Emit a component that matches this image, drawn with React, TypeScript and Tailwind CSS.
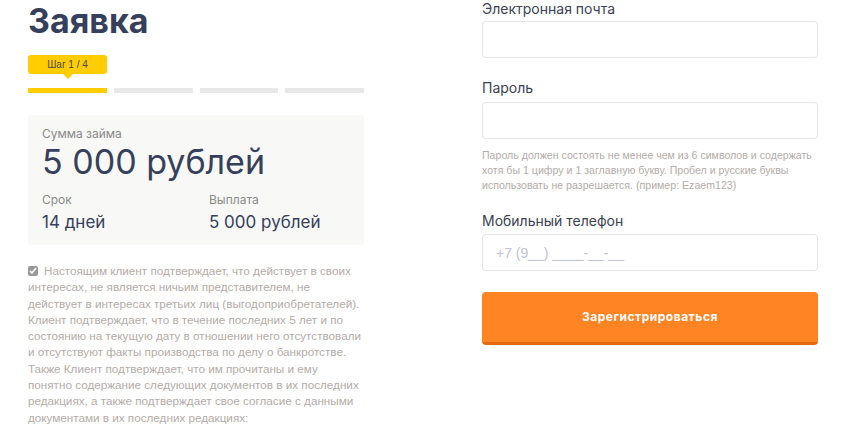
import { useState } from 'react';

const steps = [1, 2, 3, 4];

const consentLines = [
  'интересах, не является ничьим представителем, не',
  'действует в интересах третьих лиц (выгодоприобретателей).',
  'Клиент подтверждает, что в течение последних 5 лет и по',
  'состоянию на текущую дату в отношении него отсутствовали',
  'и отсутствуют факты производства по делу о банкротстве.',
  'Также Клиент подтверждает, что им прочитаны и ему',
  'понятно содержание следующих документов в их последних',
  'редакциях, а также подтверждает свое согласие с данными',
  'документами в их последних редакциях:',
];

export default function App() {
  const [agree, setAgree] = useState(true);

  return (
    <main className="w-[843px] h-[425px] overflow-hidden bg-white flex gap-[118px] pl-[28px] font-['Inter',sans-serif]">
      <section className="w-[336px] shrink-0">
        <h1 className="mt-[1px] text-[34px] leading-[40px] font-bold text-[#363f5c]">Заявка</h1>

        <div className="mt-[14px] relative w-[79px] h-[19px] rounded-[3px] bg-[#ffcc00] flex items-center justify-center text-[10px] text-[#4a4a4a] font-['Liberation_Sans',sans-serif]">
          Шаг 1 / 4
          <span className="absolute left-1/2 -translate-x-1/2 top-full w-0 h-0 border-l-[5px] border-r-[5px] border-t-[5px] border-l-transparent border-r-transparent border-t-[#ffcc00]" />
        </div>

        <div className="mt-[14px] flex gap-[7px]">
          {steps.map((s) => (
            <div key={s} className={s === 1 ? 'h-[5px] w-[79px] bg-[#ffcc00]' : 'h-[5px] w-[79px] bg-[#e8e8e8]'} />
          ))}
        </div>

        <div className="mt-[22px] rounded-[3px] bg-[#f8f8f6] px-[14px] pt-[11px] h-[130px]">
          <div className="text-[12px] leading-[16px] text-[#8a8a8a]">Сумма займа</div>
          <div className="text-[34px] leading-[40px] text-[#363f5c]">5 000 рублей</div>
          <div className="mt-[10px] grid grid-cols-2">
            <div>
              <div className="text-[12px] leading-[16px] text-[#8a8a8a]">Срок</div>
              <div className="mt-[3px] text-[17px] text-[#363f5c] leading-[22px]">14 дней</div>
            </div>
            <div className="pl-[13px]">
              <div className="text-[12px] leading-[16px] text-[#8a8a8a]">Выплата</div>
              <div className="mt-[3px] text-[17px] text-[#363f5c] leading-[22px]">5 000 рублей</div>
            </div>
          </div>
        </div>

        <div className="mt-[18px] text-[11.7px] leading-[16.3px] text-[#b3aca8] font-['Liberation_Sans',sans-serif] whitespace-nowrap">
          <div>
            <input
              type="checkbox"
              checked={agree}
              onChange={(e) => setAgree(e.target.checked)}
              className="w-[10px] h-[10px] mr-[6px] align-[-1px] accent-[#555] opacity-60"
            />
            Настоящим клиент подтверждает, что действует в своих
          </div>
          {consentLines.map((line) => (
            <div key={line}>{line}</div>
          ))}
        </div>
      </section>

      <section className="w-[336px] shrink-0">
        <label className="block text-[14px] leading-[18px] text-[#3c4150]">Электронная почта</label>
        <input className="mt-[3px] block w-full h-[37px] rounded-[4px] border border-[#e6e6e6] px-[13px] outline-none" />

        <label className="block mt-[21px] text-[14px] leading-[18px] text-[#3c4150]">Пароль</label>
        <input type="password" className="mt-[5px] block w-full h-[37px] rounded-[4px] border border-[#e6e6e6] px-[13px] outline-none" />
        <p className="mt-[9px] text-[10.6px] leading-[15px] text-[#b3aca8] font-['Liberation_Sans',sans-serif] whitespace-nowrap">
          Пароль должен состоять не менее чем из 6 символов и содержать
          <br />
          хотя бы 1 цифру и 1 заглавную букву. Пробел и русские буквы
          <br />
          использовать не разрешается. (пример: Ezaem123)
        </p>

        <label className="block mt-[19px] text-[14px] leading-[18px] text-[#3c4150]">Мобильный телефон</label>
        <input
          placeholder="+7 (9__) ____-__-__"
          className="mt-[4px] block w-full h-[37px] rounded-[4px] border border-[#e6e6e6] px-[13px] text-[14px] outline-none placeholder:text-[#bcc2d2] font-['Liberation_Sans',sans-serif]"
        />

        <button className="mt-[21px] w-full h-[53px] rounded-[4px] bg-[#ff8424] border-b-[3px] border-[#e5690f] text-white text-[12px] font-bold tracking-[0.5px]">
          Зарегистрироваться
        </button>
      </section>
    </main>
  );
}
